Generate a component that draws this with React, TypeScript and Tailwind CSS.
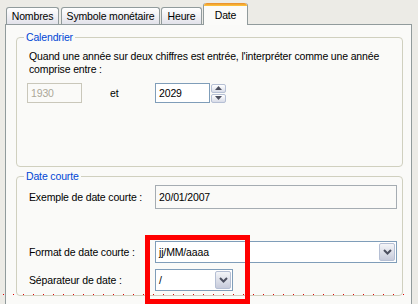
import React from 'react'

const tabs = [
    { label: 'Nombres', w: 'w-[53px]', gap: 'ml-0' },
    { label: 'Symbole monétaire', w: 'w-[99px]', gap: 'ml-[2px]' },
    { label: 'Heure', w: 'w-[41px]', gap: 'ml-[1px]' },
]

function DropButton() {
    return (
        <div className="flex h-full w-[16px] items-center justify-center rounded-[2px] border border-[#b5bfd4] bg-gradient-to-b from-[#f4f5f8] to-[#c7cbdb]">
            <svg width="9" height="6" viewBox="0 0 9 6">
                <polyline points="1,1 4.5,4.5 8,1" fill="none" stroke="#4d5060" strokeWidth="2" />
            </svg>
        </div>
    )
}

function Spinner() {
    return (
        <div className="ml-[1px] flex h-[19px] w-[15px] flex-col gap-[1px]">
            <div className="flex h-[9px] items-center justify-center rounded-[2px] border border-[#b5bfd4] bg-gradient-to-b from-white to-[#d8dce8]">
                <svg width="7" height="4" viewBox="0 0 7 4"><polygon points="3.5,0 7,4 0,4" fill="#4d5060" /></svg>
            </div>
            <div className="flex h-[9px] items-center justify-center rounded-[2px] border border-[#b5bfd4] bg-gradient-to-b from-white to-[#d8dce8]">
                <svg width="7" height="4" viewBox="0 0 7 4"><polygon points="0,0 7,0 3.5,4" fill="#4d5060" /></svg>
            </div>
        </div>
    )
}

export default function App() {
    return (
        <div className="relative h-[304px] w-[418px] overflow-hidden bg-[#ecebe6] font-['Liberation_Sans',Arial,sans-serif] text-[10.5px] leading-[13px] tracking-[-0.15px] text-black">
            {/* onglets */}
            <div className="flex h-[24px] items-end pl-[6px]">
                {tabs.map((t) => (
                    <div
                        key={t.label}
                        className={`${t.w} ${t.gap} flex h-[17px] items-center justify-center rounded-t-[3px] border border-b-0 border-[#919b9c] bg-gradient-to-b from-white to-[#e2e2ea]`}
                    >
                        {t.label}
                    </div>
                ))}
                <div className="relative z-10 -mb-[1px] ml-[1px] flex h-[22px] w-[45px] flex-col rounded-t-[3px] border-x border-[#919b9c] bg-[#fbfbf9]">
                    <div className="h-[3px] rounded-t-[3px] bg-gradient-to-b from-[#e68b2c] to-[#ffc73c]" />
                    <div className="flex flex-1 items-center justify-center pb-[1px]">Date</div>
                </div>
            </div>

            {/* panneau */}
            <div className="ml-[5px] h-[290px] w-[407px] border border-[#919b9c] bg-[#fafaf8] pl-[10px]">
                <fieldset className="mt-[6px] w-[387px] rounded-[4px] border border-[#d0d0bf] pb-[63px]">
                    <legend className="ml-[7px] px-[2px] text-[#0046d5]">Calendrier</legend>
                    <p className="mt-[6px] whitespace-nowrap pl-[12px]">
                        Quand une année sur deux chiffres est entrée, l'interpréter comme une année
                        <br />
                        comprise entre :
                    </p>
                    <div className="mt-[7px] flex items-center pl-[10px]">
                        <div className="flex h-[20px] w-[55px] items-center border border-[#c9c7ba] px-[3px] text-[#aca899]">1930</div>
                        <div className="ml-[28px] w-[45px]">et</div>
                        <div className="flex h-[20px] w-[55px] items-center border border-[#7f9db9] bg-white px-[3px]">2029</div>
                        <Spinner />
                    </div>
                </fieldset>

                <fieldset className="mt-[3px] w-[387px] rounded-[4px] border border-[#d0d0bf] pb-[4px]">
                    <legend className="ml-[7px] px-[2px] text-[#0046d5]">Date courte</legend>
                    <div className="mt-[2px] flex items-center pl-[12px]">
                        <div className="w-[126px]">Exemple de date courte :</div>
                        <div className="flex h-[24px] w-[242px] items-center border border-[#a5acb2] px-[3px]">20/01/2007</div>
                    </div>
                    <div className="mt-[32px] flex items-center pl-[12px]">
                        <div className="w-[126px]">Format de date courte :</div>
                        <div className="flex h-[22px] w-[242px] items-center border border-[#7f9db9] bg-white py-[1px] pl-[3px] pr-[1px]">
                            <span className="flex-1">jj/MM/aaaa</span>
                            <DropButton />
                        </div>
                    </div>
                    <div className="mt-[6px] flex items-center pl-[12px]">
                        <div className="w-[126px]">Séparateur de date :</div>
                        <div className="flex h-[22px] w-[78px] items-center border border-[#7f9db9] bg-white py-[1px] pl-[3px] pr-[1px]">
                            <span className="flex-1">/</span>
                            <DropButton />
                        </div>
                    </div>
                </fieldset>
            </div>

            {/* pointillés rouges */}
            <svg className="absolute left-0 top-[294px]" width="418" height="1">
                <line x1="3" y1="0.5" x2="410" y2="0.5" stroke="#e00000" strokeDasharray="1 9" />
            </svg>

            {/* cadre rouge */}
            <div className="absolute left-[145px] top-[235px] h-[69px] w-[105px] border-[5px] border-[#ff0000]" />
        </div>
    )
}
